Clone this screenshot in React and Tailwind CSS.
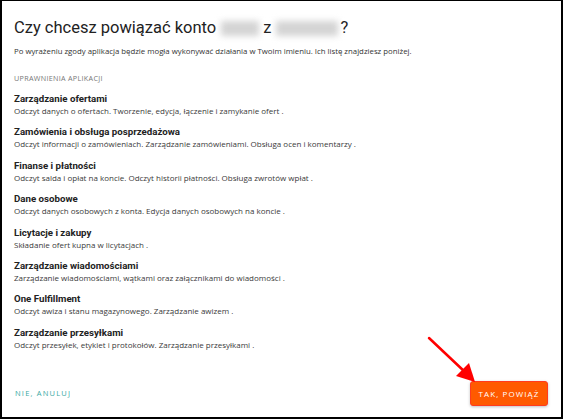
const permissions = [
  { title: "Zarządzanie ofertami", desc: "Odczyt danych o ofertach. Tworzenie, edycja, łączenie i zamykanie ofert ." },
  { title: "Zamówienia i obsługa posprzedażowa", desc: "Odczyt informacji o zamówieniach. Zarządzanie zamówieniami. Obsługa ocen i komentarzy ." },
  { title: "Finanse i płatności", desc: "Odczyt salda i opłat na koncie. Odczyt historii płatności. Obsługa zwrotów wpłat ." },
  { title: "Dane osobowe", desc: "Odczyt danych osobowych z konta. Edycja danych osobowych na koncie ." },
  { title: "Licytacje i zakupy", desc: "Składanie ofert kupna w licytacjach ." },
  { title: "Zarządzanie wiadomościami", desc: "Zarządzanie wiadomościami, wątkami oraz załącznikami do wiadomości ." },
  { title: "One Fulfillment", desc: "Odczyt awiza i stanu magazynowego. Zarządzanie awizem ." },
  { title: "Zarządzanie przesyłkami", desc: "Odczyt przesyłek, etykiet i protokołów. Zarządzanie przesyłkami ." },
];

export default function App() {
  return (
    <div className="relative w-[563px] h-[419px] bg-white border-2 border-t border-black overflow-hidden font-['Open_Sans',sans-serif] text-[#333]">
      <div className="flex flex-col h-full px-3">
        <h1 className="mt-[15px] text-[16.5px] leading-[24px] font-['Roboto',sans-serif] text-[#222] flex items-center">
          <span>Czy chcesz powiązać konto</span>
          <span className="ml-[5px] mr-[4px] w-[38px] h-[15px] bg-[#d4d4d4] blur-[3px]"></span>
          <span>z</span>
          <span className="ml-[5px] mr-[2px] w-[62px] h-[15px] bg-[#d4d4d4] blur-[3px]"></span>
          <span>?</span>
        </h1>
        <p className="mt-[5px] text-[7.8px] leading-[12px] text-[#333]">
          Po wyrażeniu zgody aplikacja będzie mogła wykonywać działania w Twoim imieniu. Ich listę znajdziesz poniżej.
        </p>
        <p className="mt-[16px] text-[7.2px] leading-[10px] uppercase tracking-[0.3px] text-[#777]">
          Uprawnienia aplikacji
        </p>
        <ul className="mt-[10px] flex flex-col gap-[9.4px]">
          {permissions.map((p) => (
            <li key={p.title}>
              <p className="font-['Roboto',sans-serif] font-bold text-[9.7px] leading-[12px] text-[#222]">{p.title}</p>
              <p className="text-[8px] leading-[12px] text-[#3a3a3a]">{p.desc}</p>
            </li>
          ))}
        </ul>
        <div className="mt-auto mb-[11px] flex items-center justify-between">
          <button className="ml-[1px] text-[7.5px] tracking-[1.2px] text-[#3ba9a4] uppercase">Nie, anuluj</button>
          <button className="mr-[1px] w-[78px] h-[25px] rounded-[3px] bg-[#ff5a00] border border-[#ff3b1f] text-white text-[8px] tracking-[1.1px] uppercase shadow-[0_1px_3px_rgba(0,0,0,0.25)]">
            Tak, powiąż
          </button>
        </div>
      </div>
      <svg className="absolute left-[420px] top-[330px]" width="60" height="55" viewBox="0 0 60 55">
        <line x1="7" y1="7" x2="43" y2="41" stroke="#ff0000" strokeWidth="2.5" strokeLinecap="round" />
        <polygon points="53,51 34,45 47,32" fill="#ff0000" />
      </svg>
    </div>
  );
}
